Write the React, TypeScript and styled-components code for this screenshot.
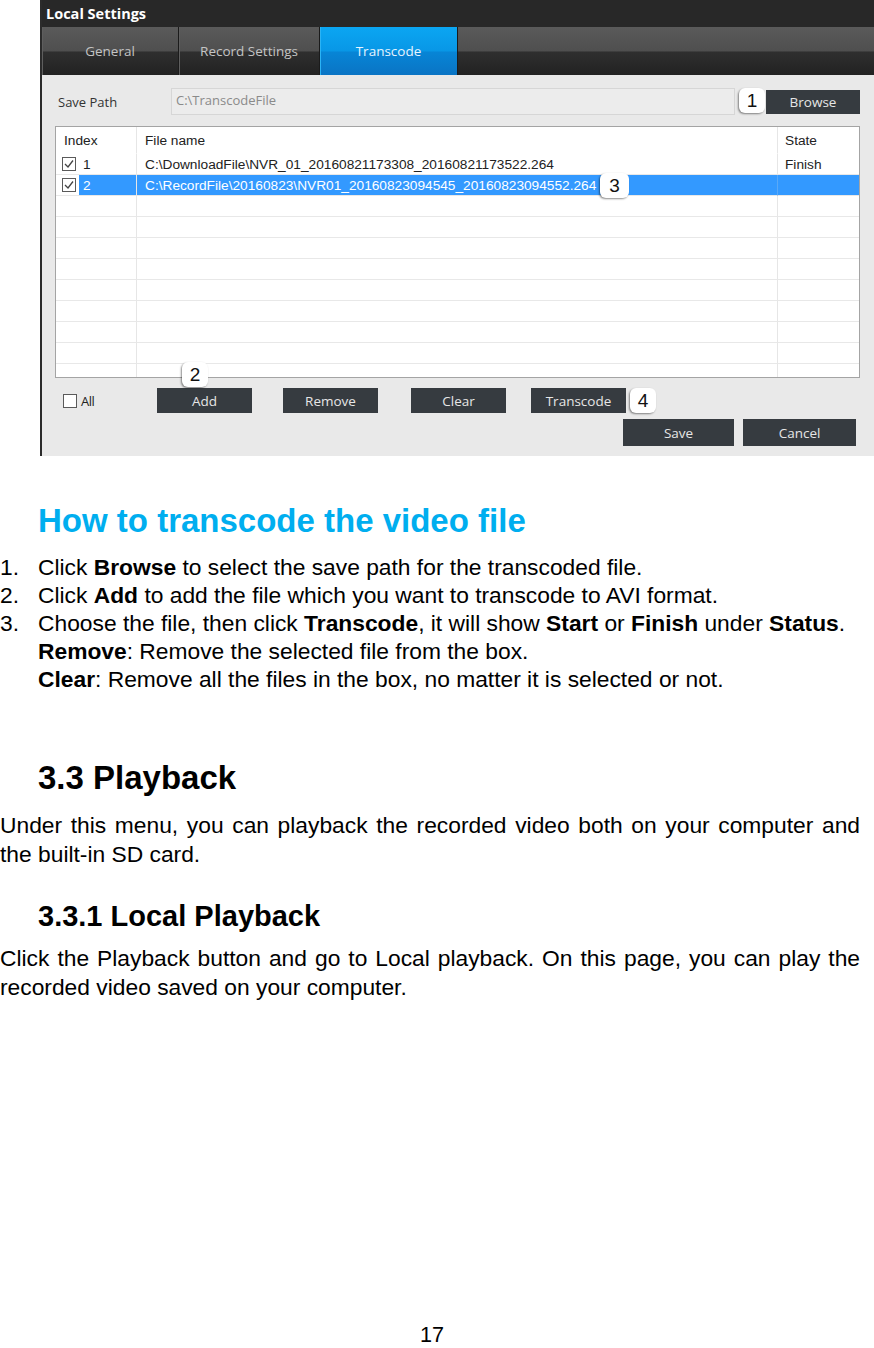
import styled, { createGlobalStyle } from 'styled-components';

const GlobalStyle = createGlobalStyle`
  html, body {
    margin: 0;
    padding: 0;
    background: #ffffff;
  }
  body {
    font-family: "Liberation Sans", Arial, sans-serif;
    color: #000;
  }
`;

const Page = styled.div`
  width: 874px;
  height: 1348px;
  display: flex;
  flex-direction: column;
  overflow: hidden;
`;

/* ---------- screenshot of the settings window ---------- */

const Shot = styled.div`
  position: relative;
  margin-left: 40px;
  width: 834px;
  height: 456px;
  border-left: 2px solid #2b2b2b;
  background: #e9e9e9;
  display: flex;
  flex-direction: column;
  font-family: "Open Sans", "Noto Sans", sans-serif;
`;

const TitleBar = styled.div`
  height: 27px;
  background: #282828;
  color: #fff;
  font-size: 14.5px;
  font-weight: 700;
  display: flex;
  align-items: center;
  padding-left: 4px;
`;

const TabBar = styled.div`
  height: 48px;
  display: flex;
  background: linear-gradient(#5a5a5a 0%, #4f4f4f 50%, #2f2f2f 52%, #222 100%);
`;

const Tab = styled.div<{ $w: number; $active?: boolean }>`
  width: ${p => p.$w}px;
  box-sizing: border-box;
  display: flex;
  align-items: center;
  justify-content: center;
  font-size: 13.5px;
  color: ${p => (p.$active ? '#e6f4ff' : '#c4c4c4')};
  border-right: 1px solid #1b1b1b;
  box-shadow: inset 1px 0 0 ${p => (p.$active ? '#2bb3f5' : '#5e5e5e')};
  background: ${p =>
    p.$active
      ? 'linear-gradient(#0ba6f2 0%, #0897e6 50%, #0785d6 52%, #0a74c4 100%)'
      : 'transparent'};
`;

const Content = styled.div`
  flex: 1;
  padding: 13px 0 0 13px;
  display: flex;
  flex-direction: column;
`;

const PathRow = styled.div`
  height: 27px;
  display: flex;
  align-items: center;
  padding-left: 3px;
`;

const PathLabel = styled.div`
  width: 113px;
  font-size: 13px;
  color: #333;
`;

const PathInput = styled.div`
  width: 564px;
  height: 27px;
  box-sizing: border-box;
  background: #ececec;
  border: 1px solid #d6d6d6;
  color: #8a8a8a;
  font-size: 13px;
  padding: 2px 4px;
`;

const DarkButton = styled.div<{ $w: number; $h?: number; $ml?: number }>`
  width: ${p => p.$w}px;
  height: ${p => p.$h ?? 25}px;
  margin-left: ${p => p.$ml ?? 0}px;
  background: #363b40;
  color: #e6e6e6;
  font-size: 13.5px;
  display: flex;
  align-items: center;
  justify-content: center;
  flex-shrink: 0;
`;

const Table = styled.div`
  margin-top: 11px;
  width: 805px;
  height: 252px;
  box-sizing: border-box;
  border: 1px solid #a4a4a4;
  background: #fff;
  overflow: hidden;
  font-family: "Liberation Sans", Arial, sans-serif;
  font-size: 13.7px;
`;

const Row = styled.div<{ $h: number }>`
  display: grid;
  grid-template-columns: 81px 641px 81px;
  height: ${p => p.$h}px;
`;

const Cell = styled.div<{ $sel?: boolean; $pl?: number; $head?: boolean }>`
  display: flex;
  align-items: center;
  padding-left: ${p => p.$pl ?? 8}px;
  border-right: 1px solid ${p => (p.$sel ? '#5aa9f7' : '#e6e6e6')};
  border-bottom: 1px solid ${p => (p.$head ? 'transparent' : '#e8e8e8')};
  background: ${p => (p.$sel ? '#3399ff' : 'transparent')};
  color: ${p => (p.$sel ? '#fff' : '#222')};
  white-space: nowrap;
  overflow: hidden;

  &:last-child {
    border-right: none;
  }
`;

const IndexCell = styled.div`
  display: flex;
  align-items: stretch;
  padding-left: 6px;
  border-right: 1px solid #e6e6e6;
  border-bottom: 1px solid #e8e8e8;
`;

const BoxWrap = styled.div`
  display: flex;
  align-items: center;
  width: 17px;
`;

const IndexNum = styled.div<{ $sel?: boolean }>`
  flex: 1;
  display: flex;
  align-items: center;
  padding-left: 4px;
  background: ${p => (p.$sel ? '#3399ff' : 'transparent')};
  color: ${p => (p.$sel ? '#fff' : '#222')};
`;

const CheckBox = styled.div`
  width: 14px;
  height: 14px;
  box-sizing: border-box;
  border: 1px solid #5a5a5a;
  background: #fff;
  display: flex;
  align-items: center;
  justify-content: center;
`;

const Controls = styled.div`
  margin-top: 10px;
  height: 25px;
  display: flex;
  align-items: center;
`;

const AllLabel = styled.div`
  width: 102px;
  box-sizing: border-box;
  padding-left: 8px;
  display: flex;
  align-items: center;
  gap: 4px;
  font-size: 13px;
  letter-spacing: -0.5px;
  color: #222;
`;

const SaveRow = styled.div`
  margin-top: 6px;
  display: flex;
  padding-left: 568px;
`;

const Callout = styled.div<{ $x: number; $y: number; $w?: number }>`
  position: absolute;
  left: ${p => p.$x}px;
  top: ${p => p.$y}px;
  width: ${p => p.$w ?? 26}px;
  height: 25px;
  background: #fff;
  border-radius: 6px;
  box-shadow: -1px 1px 2px rgba(0, 0, 0, 0.45);
  color: #111;
  font-family: "Liberation Sans", Arial, sans-serif;
  font-size: 19px;
  display: flex;
  align-items: center;
  justify-content: center;
`;

/* ---------- document text ---------- */

const HowHeading = styled.h2`
  margin: 46px 0 0 38px;
  font-size: 33px;
  line-height: 38px;
  font-weight: 700;
  color: #00aeef;
`;

const Steps = styled.div`
  margin-top: 13px;
  display: grid;
  grid-template-columns: 38px 1fr;
  font-size: 22.8px;
  line-height: 28px;
`;

const SectionHeading = styled.h2<{ $size: number; $mt: number }>`
  margin: ${p => p.$mt}px 0 0 38px;
  font-size: ${p => p.$size}px;
  line-height: ${p => p.$size + 5}px;
  font-weight: 700;
`;

const Para = styled.p<{ $mt: number }>`
  margin: ${p => p.$mt}px 0 0 0;
  width: 860px;
  font-size: 22.8px;
  line-height: 29px;
  text-align: justify;
`;

const PageNum = styled.div`
  margin-top: auto;
  padding-right: 10px;
  text-align: center;
  font-size: 21.6px;
  line-height: 26px;
`;

function Check() {
  return (
    <CheckBox>
      <svg width="10" height="10" viewBox="0 0 10 10">
        <polyline points="1,5 4,8 9,1.5" fill="none" stroke="#444" strokeWidth="1.3" />
      </svg>
    </CheckBox>
  );
}

const files = [
  { idx: '1', name: 'C:\\DownloadFile\\NVR_01_20160821173308_20160821173522.264', state: 'Finish', sel: false },
  { idx: '2', name: 'C:\\RecordFile\\20160823\\NVR01_20160823094545_20160823094552.264', state: '', sel: true },
];

export default function App() {
  const empty = Array.from({ length: 9 });
  return (
    <Page>
      <GlobalStyle />
      <Shot>
        <TitleBar>Local Settings</TitleBar>
        <TabBar>
          <Tab $w={137}>General</Tab>
          <Tab $w={141}>Record Settings</Tab>
          <Tab $w={138} $active>Transcode</Tab>
        </TabBar>
        <Content>
          <PathRow>
            <PathLabel>Save Path</PathLabel>
            <PathInput>C:\TranscodeFile</PathInput>
            <DarkButton $w={94} $h={24} $ml={31}>Browse</DarkButton>
          </PathRow>

          <Table>
            <Row $h={27}>
              <Cell $head>Index</Cell>
              <Cell $head>File name</Cell>
              <Cell $head $pl={7}>State</Cell>
            </Row>
            {files.map(f => (
              <Row $h={21} key={f.idx}>
                <IndexCell>
                  <BoxWrap>
                    <Check />
                  </BoxWrap>
                  <IndexNum $sel={f.sel}>{f.idx}</IndexNum>
                </IndexCell>
                <Cell $sel={f.sel}>{f.name}</Cell>
                <Cell $sel={f.sel} $pl={7}>{f.state}</Cell>
              </Row>
            ))}
            {empty.map((_, i) => (
              <Row $h={21} key={i}>
                <Cell />
                <Cell />
                <Cell />
              </Row>
            ))}
          </Table>

          <Controls>
            <AllLabel>
              <CheckBox />
              All
            </AllLabel>
            <DarkButton $w={95}>Add</DarkButton>
            <DarkButton $w={95} $ml={31}>Remove</DarkButton>
            <DarkButton $w={95} $ml={33}>Clear</DarkButton>
            <DarkButton $w={95} $ml={25}>Transcode</DarkButton>
          </Controls>

          <SaveRow>
            <DarkButton $w={111} $h={27}>Save</DarkButton>
            <DarkButton $w={113} $h={27} $ml={9}>Cancel</DarkButton>
          </SaveRow>
        </Content>

        <Callout $x={697} $y={88}>1</Callout>
        <Callout $x={140} $y={362}>2</Callout>
        <Callout $x={558} $y={173} $w={29}>3</Callout>
        <Callout $x={588} $y={388}>4</Callout>
      </Shot>

      <HowHeading>How to transcode the video file</HowHeading>
      <Steps>
        <span>1.</span>
        <span>Click <b>Browse</b> to select the save path for the transcoded file.</span>
        <span>2.</span>
        <span>Click <b>Add</b> to add the file which you want to transcode to AVI format.</span>
        <span>3.</span>
        <span>
          Choose the file, then click <b>Transcode</b>, it will show <b>Start</b> or <b>Finish</b> under{' '}
          <b>Status</b>.
        </span>
        <span />
        <span><b>Remove</b>: Remove the selected file from the box.</span>
        <span />
        <span><b>Clear</b>: Remove all the files in the box, no matter it is selected or not.</span>
      </Steps>

      <SectionHeading $size={33} $mt={66}>3.3 Playback</SectionHeading>
      <Para $mt={14}>
        Under this menu, you can playback the recorded video both on your computer and the built-in SD card.
      </Para>

      <SectionHeading $size={29} $mt={30}>3.3.1 Local Playback</SectionHeading>
      <Para $mt={11}>
        Click the Playback button and go to Local playback. On this page, you can play the recorded video saved on
        your computer.
      </Para>

      <PageNum>17</PageNum>
    </Page>
  );
}
